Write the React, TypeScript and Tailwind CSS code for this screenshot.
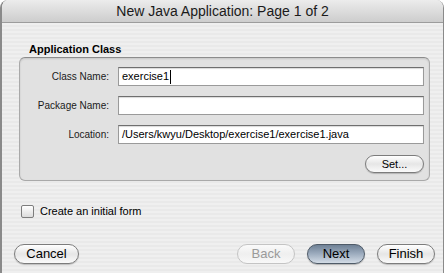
import React from "react";

const font = "font-['Liberation_Sans',Arial,sans-serif]";

const Field = ({ value, caret }: { value: string; caret?: boolean }) => (
  <div className="w-[306px] h-[19px] bg-white border border-[#9a9a9a] border-t-[#6f6f6f] shadow-[inset_0_1px_1px_rgba(0,0,0,0.15)] flex items-center pl-[3px] text-[11px] text-black">
    <span>{value}</span>
    {caret ? <span className="ml-[1px] h-[14px] border-r border-black" /> : null}
  </div>
);

const Row = ({ label, value, caret }: { label: string; value: string; caret?: boolean }) => (
  <div className="flex items-center">
    <div className="w-[90px] pr-[1px] text-right text-[10px] text-[#1a1a1a]">{label}</div>
    <div className="ml-[8px]">
      <Field value={value} caret={caret} />
    </div>
  </div>
);

const Pill = ({ label, kind }: { label: string; kind?: "default" | "disabled" }) => {
  let cls =
    "border-[#7c7c7c] bg-gradient-to-b from-[#ffffff] via-[#e6e6e6] to-[#fafafa] text-black shadow-[0_1px_1px_rgba(0,0,0,0.2)]";
  if (kind === "default")
    cls =
      "border-[#4f5b68] bg-gradient-to-b from-[#6f8196] via-[#9eadbf] to-[#d3dce6] text-black shadow-[0_1px_1px_rgba(0,0,0,0.25)]";
  if (kind === "disabled")
    cls = "border-[#c4c4c4] bg-gradient-to-b from-[#fafafa] via-[#efefef] to-[#f8f8f8] text-[#9a9a9a]";
  return (
    <div className={`w-[58px] h-[20px] rounded-full border flex items-center justify-center text-[13px] ${cls}`}>
      {label}
    </div>
  );
};

export default function App() {
  return (
    <div className={`w-[444px] h-[273px] bg-white overflow-hidden ${font}`}>
      <div className="h-full flex flex-col rounded-t-[8px] overflow-hidden border-l-2 border-r border-[#8a8a8a]">
        <div className="h-[23px] shrink-0 border-b border-[#9c9c9c] bg-gradient-to-b from-[#ececec] to-[#cdcdcd] flex items-center justify-center text-[14px] text-[#1a1a1a]">
          New Java Application: Page 1 of 2
        </div>
        <div className="flex-1 bg-[repeating-linear-gradient(180deg,#efefef_0px,#efefef_2px,#e9e9e9_2px,#e9e9e9_4px)] pt-[20px]">
          <div className="ml-[27px] text-[11px] leading-[13px] font-bold text-black">Application Class</div>
          <div className="ml-[17px] mt-[1px] w-[411px] h-[124px] rounded-[6px] border border-[#a9a9a9] border-t-[#8c8c8c] bg-[#e1e1e1] shadow-[inset_0_1px_2px_rgba(0,0,0,0.12)] pt-[9px] pr-[5px]">
            <div className="flex flex-col gap-[10px]">
              <Row label="Class Name:" value="exercise1" caret />
              <Row label="Package Name:" value="" />
              <Row label="Location:" value="/Users/kwyu/Desktop/exercise1/exercise1.java" />
            </div>
            <div className="flex justify-end mt-[11px]">
              <div className="w-[59px] h-[18px] rounded-full border border-[#7c7c7c] bg-gradient-to-b from-[#ffffff] via-[#e6e6e6] to-[#fafafa] shadow-[0_1px_1px_rgba(0,0,0,0.2)] flex items-center justify-center text-[11px] text-black">
                Set...
              </div>
            </div>
          </div>
          <div className="flex items-center ml-[19px] mt-[22px]">
            <div className="w-[13px] h-[13px] rounded-[2px] border border-[#7d7d7d] bg-gradient-to-b from-[#ffffff] to-[#dcdcdc]" />
            <div className="ml-[6px] text-[11px] text-black">Create an initial form</div>
          </div>
          <div className="flex items-center ml-[12px] mt-[24px] pr-[8px]">
            <div className="w-[65px] h-[20px] rounded-full border border-[#7c7c7c] bg-gradient-to-b from-[#ffffff] via-[#e6e6e6] to-[#fafafa] shadow-[0_1px_1px_rgba(0,0,0,0.2)] flex items-center justify-center text-[13px] text-black">
              Cancel
            </div>
            <div className="flex-1" />
            <div className="flex gap-[12px]">
              <Pill label="Back" kind="disabled" />
              <Pill label="Next" kind="default" />
              <Pill label="Finish" />
            </div>
          </div>
        </div>
      </div>
    </div>
  );
}
